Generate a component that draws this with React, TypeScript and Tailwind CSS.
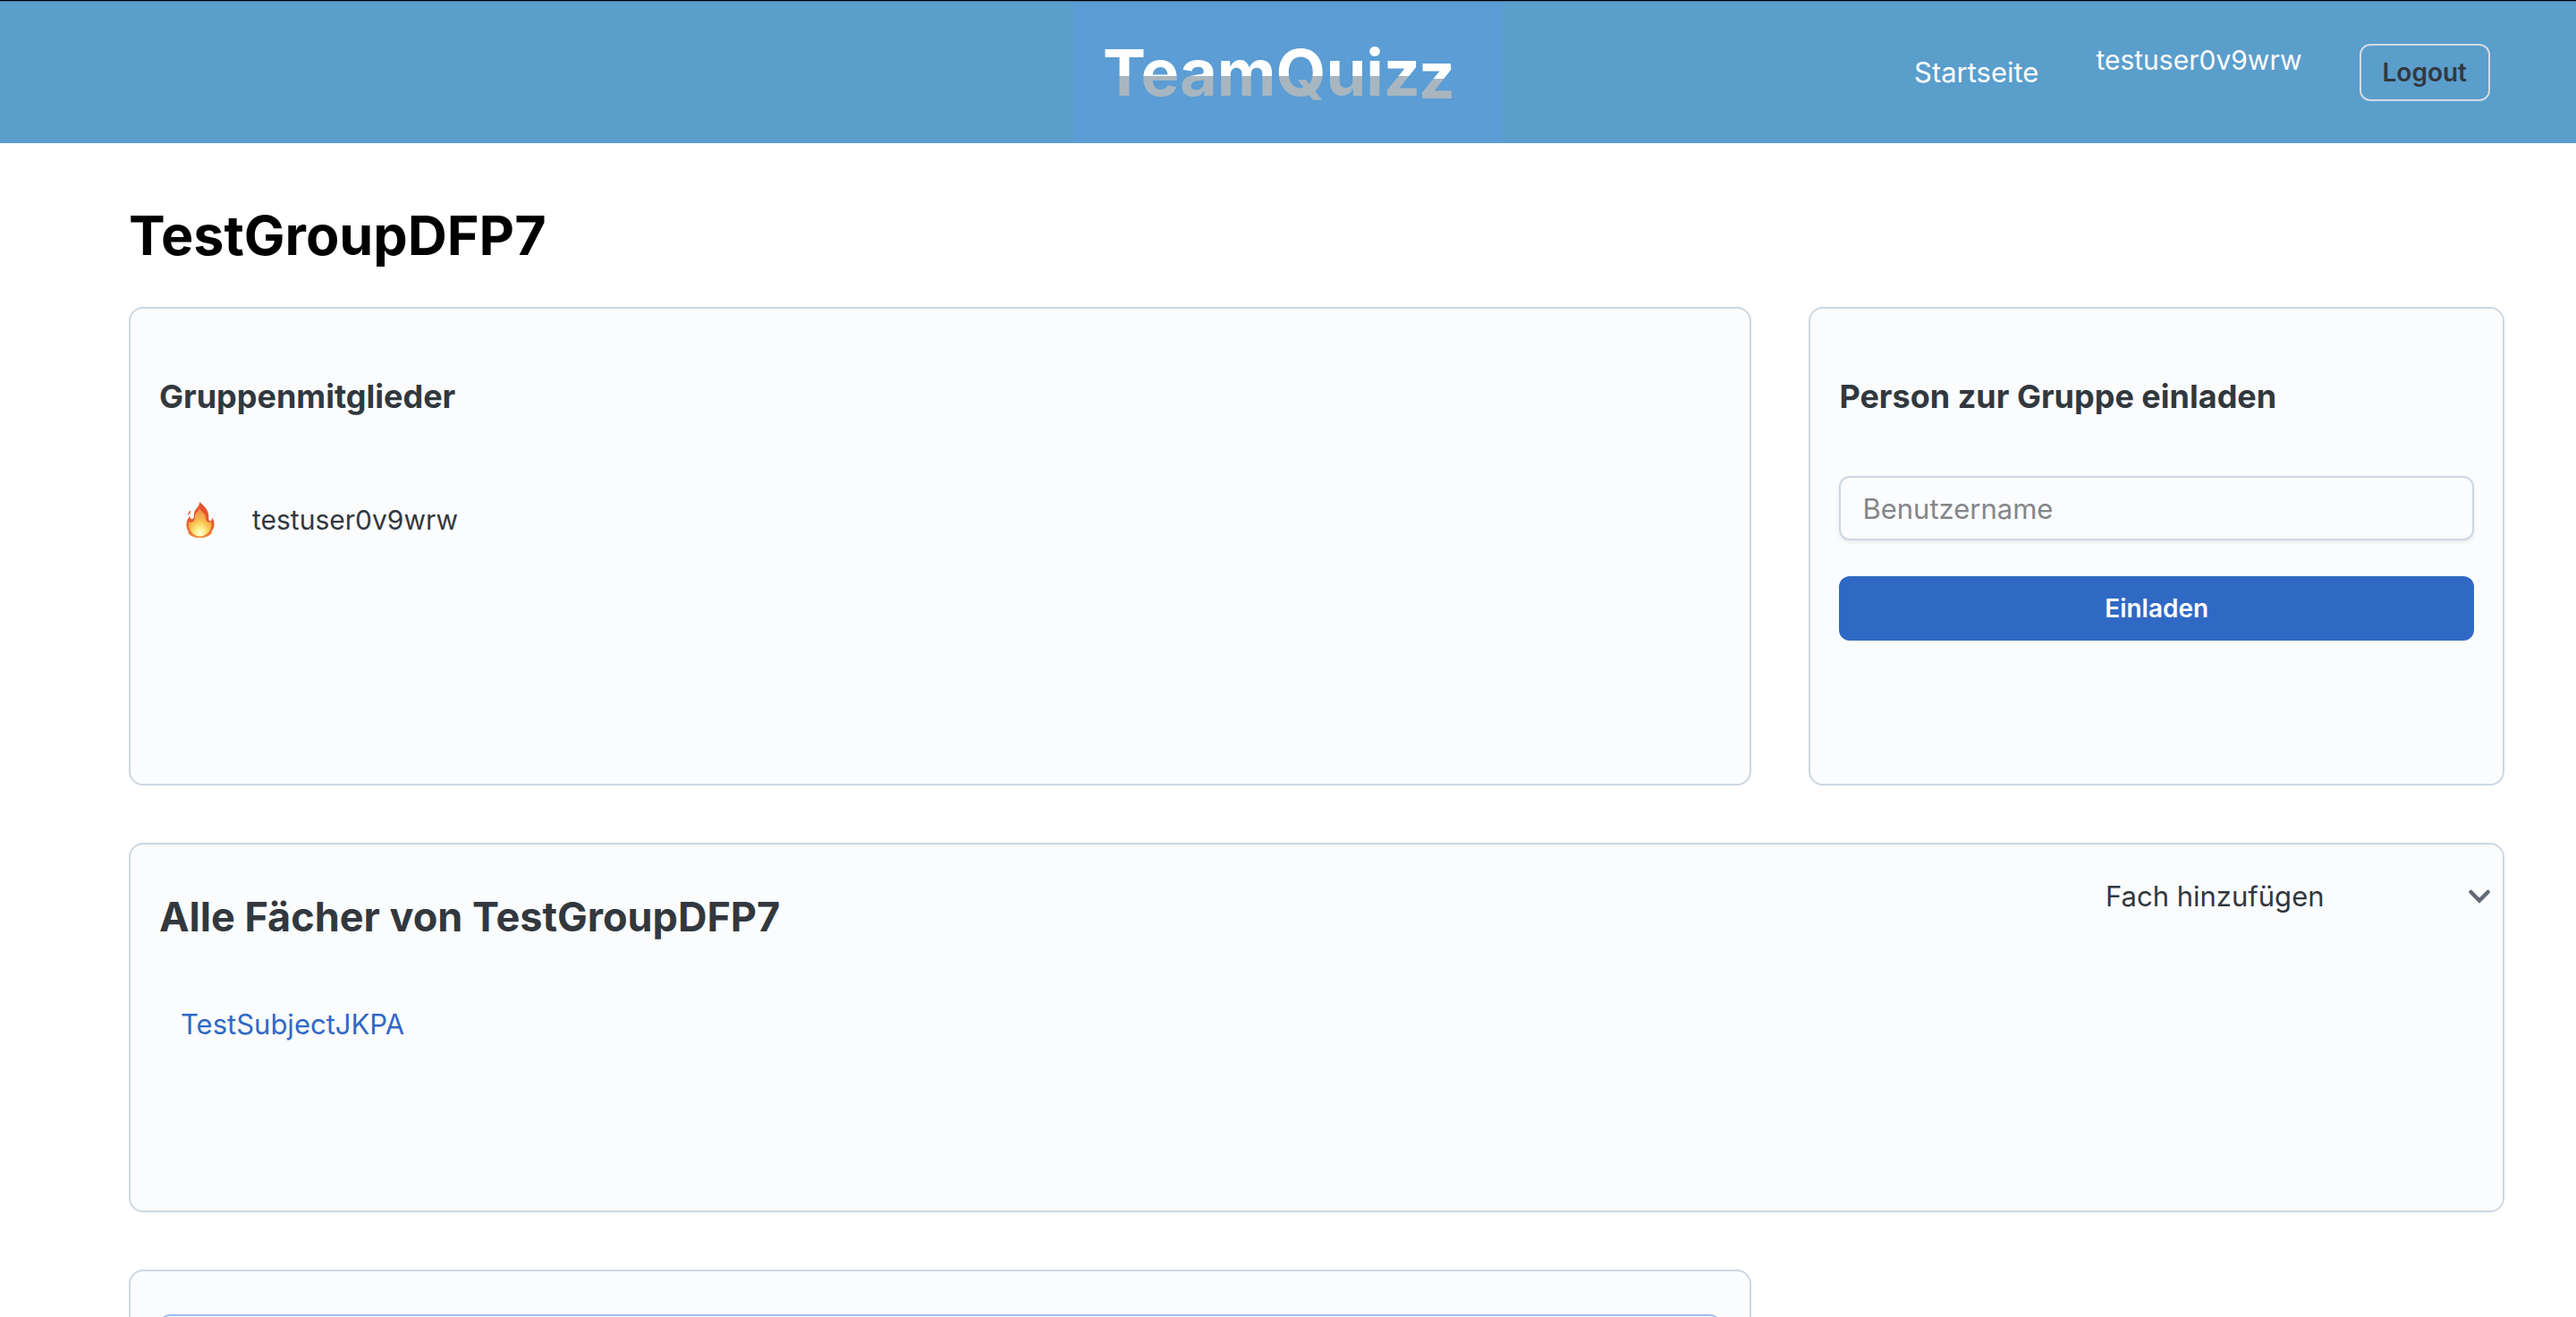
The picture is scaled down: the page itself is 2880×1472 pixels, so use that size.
import type { ReactNode } from "react";

function Logo() {
  return (
    <svg
      viewBox="0 0 480 158"
      className="h-[158px] w-[480px]"
      role="img"
      aria-label="TeamQuizz"
      fontFamily="Inter, sans-serif"
      fontWeight={700}
      fontSize={72}
    >
      <defs>
        <linearGradient id="logo-split" gradientUnits="userSpaceOnUse" x1="0" y1="0" x2="0" y2="158">
          <stop offset="0.525" stopColor="#ffffff" />
          <stop offset="0.525" stopColor="#a9b6bf" />
        </linearGradient>
        <linearGradient id="logo-split-low" gradientUnits="userSpaceOnUse" x1="0" y1="0" x2="0" y2="158">
          <stop offset="0.544" stopColor="#ffffff" />
          <stop offset="0.544" stopColor="#a9b6bf" />
        </linearGradient>
      </defs>
      <rect width="480" height="158" fill="#5b9dd4" />
      <text x="33" y="105" fill="url(#logo-split)">
        TeamQuiz
      </text>
      <text x="427" y="108" textAnchor="end" fill="url(#logo-split-low)">
        z
      </text>
    </svg>
  );
}

function Flame() {
  return (
    <svg viewBox="0 0 32 40" className="h-10 w-8" aria-hidden="true">
      <defs>
        <linearGradient id="flame-outer" x1="0" y1="0" x2="0" y2="1">
          <stop offset="0" stopColor="#e2512f" />
          <stop offset="0.6" stopColor="#ea5a2c" />
          <stop offset="1" stopColor="#f08a3c" />
        </linearGradient>
        <radialGradient id="flame-inner" cx="0.5" cy="0.9" r="0.85">
          <stop offset="0" stopColor="#fffde0" />
          <stop offset="0.25" stopColor="#fdf08a" />
          <stop offset="0.55" stopColor="#f8bd4d" />
          <stop offset="1" stopColor="#ee8a4a" />
        </radialGradient>
      </defs>
      <path
        fill="url(#flame-outer)"
        d="M15 0c.2 2.600-.8 4.600-3 7-2 2.200-3.200 4.300-3.100 7.400.1 2.600-.5 4.600-2 4.900-1.700.3-2.400-1.300-2.300-3.600C2 18 .4 21.500.4 25.500.4 29 1.500 31.800 3.300 34c-.6.2-1.200 0-1.700-.3C4.200 38 9.400 40 15.500 40c6.200 0 11.400-2 14-6.300-.5.300-1 .4-1.500.2 2.100-2.400 3.500-5.400 3.500-9 0-3-.8-5.400-2.500-7.400.1 2.200-.6 3.700-1.900 3.700-1.600 0-2-1.700-1.800-4C25.900 10 21 5.200 15 0Z"
      />
      <path fill="#e8603f" d="M4.800 9.500c.5 1.700.2 2.700-.9 3.800-.7.8-1 1.600-1 2.500-1.300-2.200-.2-4.900 1.900-6.300Z" />
      <path
        fill="url(#flame-inner)"
        d="M15 6.500c.8 3.600 5.800 5.200 6.800 10.300.4 2.200.3 4.300 1.700 5.300 1.400 1 3.200.8 4.400-.4 1.300 5.600-.4 9.800-3 12.300-2.400 2.600-5.600 4.600-9.400 4.600-3.900 0-7.300-2-9.500-4.800-2.300-2.800-3.700-6.800-2.900-11.600 1.200 1 3 1.100 4.500 0 2.400-1.800 2-4.900 2.400-7.500.4-2.800 4.300-4.500 5-8.200Z"
      />
    </svg>
  );
}

function Chevron() {
  return (
    <svg viewBox="0 0 24 16" className="h-4 w-6" fill="none" aria-hidden="true">
      <path d="M2.500 3 12 12.500 21.500 3" stroke="#636b74" strokeWidth="4.500" strokeLinecap="round" />
    </svg>
  );
}

function Card({ className, children }: { className: string; children?: ReactNode }) {
  return <section className={`border-2 border-[#cdd7e1] bg-[#fbfcfe] px-8 ${className}`}>{children}</section>;
}

export default function App() {
  return (
    <div className="flex min-h-screen flex-col bg-white font-['Inter',sans-serif] text-[#32383e]">
      <header className="border-t border-black bg-[#5a9ecc]">
        <div className="grid grid-cols-[1fr_auto_1fr] items-center border-t border-[#44769b]">
          <a href="#" className="col-start-2">
            <Logo />
          </a>
          <nav className="flex items-center justify-end gap-16 pr-24 text-white">
            <a href="#" className="text-[31px] leading-10">
              Startseite
            </a>
            <a href="#" className="pb-7 text-[30px] leading-10">
              testuser0v9wrw
            </a>
            <button
              type="button"
              className="h-16 rounded-xl border-2 border-[#d3dbe4] px-6 text-[28px] font-semibold leading-10 text-[#32383e]"
            >
              Logout
            </button>
          </nav>
        </div>
      </header>

      <main className="flex flex-1 flex-col pr-20 pl-36 pt-16">
        <h1 className="mb-10 text-[61px] font-bold leading-[79px] text-black">TestGroupDFP7</h1>

        <div className="flex flex-1 flex-col gap-16">
          <div className="grid grid-cols-[7fr_3fr] gap-16">
            <Card className="min-h-[535px] rounded-2xl pt-[74px]">
              <h3 className="text-[36px] font-bold leading-12">Gruppenmitglieder</h3>
              <ul className="mt-[90px] pl-[30px]">
                <li className="flex items-center gap-[42px] text-[30px] leading-12">
                  <Flame />
                  testuser0v9wrw
                </li>
              </ul>
            </Card>
            <Card className="min-h-[535px] rounded-2xl pt-[74px]">
              <h3 className="text-[36px] font-bold leading-12">Person zur Gruppe einladen</h3>
              <form className="mt-[65px] flex flex-col gap-10" onSubmit={(e) => e.preventDefault()}>
                <input
                  type="text"
                  aria-label="Benutzername"
                  placeholder="Benutzername"
                  className="h-18 w-full rounded-xl border-2 border-[#cdd7e1] bg-[#fbfcfe] px-6 text-[31px] shadow-[0_2px_4px_rgba(21,21,21,0.08)] placeholder:text-[#84868a]"
                />
                <button
                  type="submit"
                  className="h-18 w-full rounded-xl bg-[#3069c4] text-[28px] font-semibold text-white"
                >
                  Einladen
                </button>
              </form>
            </Card>
          </div>

          <Card className="flex min-h-[413px] items-start justify-between rounded-2xl pr-[14px]">
            <div className="pt-[53px]">
              <h2 className="text-[45px] font-bold leading-14">Alle Fächer von TestGroupDFP7</h2>
              <ul className="mt-[68px] pl-6">
                <li className="text-[31px] leading-12">
                  <a href="#" className="text-[#3069c4]">
                    TestSubjectJKPA
                  </a>
                </li>
              </ul>
            </div>
            <button
              type="button"
              aria-expanded="false"
              className="mt-[34px] flex w-[430px] items-center justify-between text-[31px] leading-12"
            >
              Fach hinzufügen
              <Chevron />
            </button>
          </Card>

          <div className="grid flex-1 grid-cols-[7fr_3fr] gap-16">
            <Card className="flex flex-col rounded-t-2xl border-b-0 pt-12">
              <div className="h-px grow overflow-hidden">
                <div className="h-20 rounded-xl border-2 border-[#9cbff0]" />
              </div>
            </Card>
          </div>
        </div>
      </main>
    </div>
  );
}
